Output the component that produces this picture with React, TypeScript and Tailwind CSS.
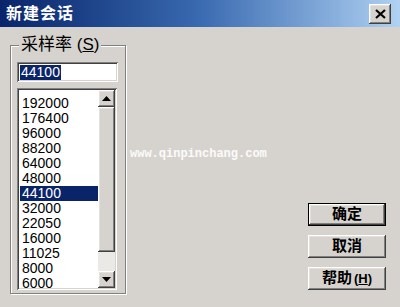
import React from "react";

const raised =
  "bg-[#d6d3ce] shadow-[inset_-1px_-1px_0_#404040,inset_1px_1px_0_#ffffff,inset_-2px_-2px_0_#808080,inset_2px_2px_0_#e4e1dc]";
const sunken =
  "shadow-[inset_1px_1px_0_#808080,inset_-1px_-1px_0_#ffffff,inset_2px_2px_0_#404040,inset_-2px_-2px_0_#d6d3ce]";

const rates = [
  "192000",
  "176400",
  "96000",
  "88200",
  "64000",
  "48000",
  "44100",
  "32000",
  "22050",
  "16000",
  "11025",
  "8000",
  "6000",
];

function Arrow({ up }: { up?: boolean }) {
  return (
    <svg width="9" height="5" viewBox="0 0 9 5">
      {up ? <polygon points="4.5,0 9,5 0,5" fill="#000" /> : <polygon points="0,0 9,0 4.5,5" fill="#000" />}
    </svg>
  );
}

function Button({ children, isDefault }: { children: React.ReactNode; isDefault?: boolean }) {
  return (
    <div className={`w-[78px] h-[23px] ${isDefault ? "border border-black" : ""}`}>
      <div
        className={`w-full h-full flex items-center justify-center text-[15px] font-semibold text-black ${raised}`}
      >
        {children}
      </div>
    </div>
  );
}

export default function App() {
  return (
    <div
      className="relative w-[400px] h-[307px] bg-[#d6d3ce] flex flex-col overflow-hidden"
      style={{ fontFamily: '"Liberation Sans", "Noto Sans CJK SC", sans-serif' }}
    >
      {/* title bar */}
      <div className="h-[27px] shrink-0 flex items-center justify-between pl-[6px] pr-[9px] bg-gradient-to-r from-[#0a246a] via-[#3a6ab0] to-[#b0d2f2]">
        <span className="text-white font-bold text-[16px] leading-none tracking-[1px]">新建会话</span>
        <div className={`w-[22px] h-[20px] flex items-center justify-center ${raised}`}>
          <svg width="11" height="10" viewBox="0 0 11 10">
            <path d="M1 1 L10 9 M10 1 L1 9" stroke="#000" strokeWidth="2.2" />
          </svg>
        </div>
      </div>

      <div className="flex flex-1">
        {/* sample rate group */}
        <fieldset className="ml-[10px] mt-[8px] mb-[13px] w-[116px] border border-[#808080] shadow-[inset_1px_1px_0_#ffffff,1px_1px_0_#ffffff]">
          <legend className="ml-[8px] px-[2px] bg-[#d6d3ce] text-[17px] leading-[20px] text-black">
            采样率 (<span className="underline">S</span>)
          </legend>

          <div className={`mt-[7px] ml-[6px] w-[101px] h-[20px] bg-white flex items-center pl-[3px] ${sunken}`}>
            <span className="bg-[#0a246a] text-white text-[14px] leading-[15px] px-[1px]">44100</span>
          </div>

          <div className={`mt-[6px] ml-[6px] w-[100px] h-[202px] bg-white p-[2px] flex ${sunken}`}>
            <div className="flex-1 overflow-hidden pt-[6px] pl-[1px]">
              {rates.map((r) => (
                <div
                  key={r}
                  className={`h-[15px] leading-[15px] text-[14px] pl-[2px] ${
                    r === "44100" ? "bg-[#0a246a] text-white" : "text-black"
                  }`}
                >
                  {r}
                </div>
              ))}
            </div>
            <div className="w-[17px] flex flex-col bg-[#ebe9e5]">
              <div className={`h-[17px] flex items-center justify-center ${raised}`}>
                <Arrow up />
              </div>
              <div className={`h-[145px] ${raised}`} />
              <div className="flex-1" />
              <div className={`h-[17px] flex items-center justify-center ${raised}`}>
                <Arrow />
              </div>
            </div>
          </div>
        </fieldset>

        {/* buttons */}
        <div className="ml-auto mr-[14px] mb-[17px] flex flex-col justify-end gap-[9px]">
          <Button isDefault>确定</Button>
          <Button>取消</Button>
          <Button>
            帮助 <span className="text-[13px] ml-[2px]">(<span className="underline">H</span>)</span>
          </Button>
        </div>
      </div>

      {/* watermark */}
      <div
        className="absolute left-[130px] top-[147px] text-[12px] leading-[14px] font-bold text-white/90"
        style={{ fontFamily: '"Liberation Mono", monospace' }}
      >
        www.qinpinchang.com
      </div>
    </div>
  );
}
